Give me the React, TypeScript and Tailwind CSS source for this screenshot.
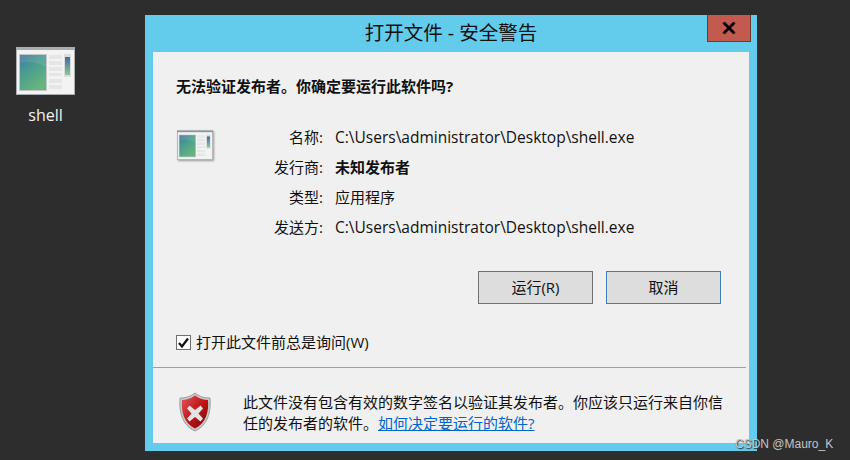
const font = { fontFamily: '"Open Sans", "Noto Sans CJK SC", sans-serif' };

const AppIcon = ({ id, className, frame }: { id: string; className: string; frame: string }) => (
    <svg viewBox="0 0 59 48" className={className}>
        <defs>
            <linearGradient id={`${id}-a`} x1="0" y1="0" x2="0.6" y2="1">
                <stop offset="0" stopColor="#46739f" />
                <stop offset="0.4" stopColor="#479a93" />
                <stop offset="1" stopColor="#68b57c" />
            </linearGradient>
            <linearGradient id={`${id}-b`} x1="0" y1="0" x2="0" y2="1">
                <stop offset="0" stopColor="#3f6aa5" />
                <stop offset="1" stopColor="#8cc98f" />
            </linearGradient>
        </defs>
        <rect x="0" y="0" width="59" height="48" fill={frame} />
        <rect x="1" y="3" width="57" height="44" fill="#f3f3f3" />
        <rect x="3" y="7" width="28" height="37" fill="#c3c7cc" />
        <rect x="4" y="8" width="26" height="35" fill={`url(#${id}-a)`} />
        <path d="M4 16 Q18 13 30 20 V8 H4 Z" fill="#ffffff" opacity="0.1" />
        <g fill="#e6e6e6">
            <rect x="33" y="8" width="13" height="4" />
            <rect x="33" y="14" width="13" height="4" />
            <rect x="33" y="20" width="13" height="4" />
            <rect x="33" y="26" width="13" height="3" />
            <rect x="33" y="32" width="13" height="4" />
            <rect x="33" y="38" width="13" height="4" />
        </g>
        <rect x="48" y="7" width="7" height="23" fill="#dcdcdc" />
        <rect x="49" y="10" width="5" height="18" fill={`url(#${id}-b)`} />
    </svg>
);

const ShieldIcon = () => (
    <svg viewBox="0 0 34 40" className="h-[40px] w-[34px]">
        <defs>
            <linearGradient id="shield" x1="0" y1="0" x2="1" y2="1">
                <stop offset="0" stopColor="#e0585a" />
                <stop offset="0.5" stopColor="#c01518" />
                <stop offset="1" stopColor="#7d0505" />
            </linearGradient>
        </defs>
        <path d="M17 1 C22 5 27 6 32 6 C33 20 30 33 17 39 C4 33 1 20 2 6 C7 6 12 5 17 1 Z" fill="#c9c9c9" stroke="#8d8d8d" strokeWidth="0.8" />
        <path d="M17 3.5 C22 7 26 8 30 8 C31 20 28 31 17 36.5 C6 31 3 20 4 8 C8 8 12 7 17 3.5 Z" fill="url(#shield)" />
        <path d="M11.5 13.5 L17 18 L22.5 13.5 L25 16.5 L20.5 21.5 L25 26.5 L22.5 29.5 L17 25 L11.5 29.5 L9 26.5 L13.5 21.5 L9 16.5 Z" fill="#e4e4e4" />
    </svg>
);

const fields = [
    { label: '名称:', value: 'C:\\Users\\administrator\\Desktop\\shell.exe' },
    { label: '发行商:', value: '未知发布者', bold: true },
    { label: '类型:', value: '应用程序' },
    { label: '发送方:', value: 'C:\\Users\\administrator\\Desktop\\shell.exe' },
];

const App = () => {
    return (
        <div className="relative h-[460px] w-[850px] overflow-hidden bg-[#2d2d2d]" style={font}>
            <div className="absolute left-[16px] top-[47px] flex w-[59px] flex-col items-center">
                <AppIcon id="desk" frame="#a9adb0" className="h-[48px] w-[59px]" />
                <span className="mt-[10px] text-[16px] leading-[20px] text-[#f2f2f2]">shell</span>
            </div>

            <div className="absolute left-[145px] top-[15px] flex h-[436px] w-[612px] flex-col bg-[#63cbec] px-[8px] pb-[8px]">
                <div className="flex h-[36px] items-center justify-center text-[19.5px] text-[#111]">打开文件 - 安全警告</div>
                <div className="absolute right-[6px] top-0 flex h-[27px] w-[44px] items-center justify-center border border-t-0 border-[#6b3a35] bg-[#c35a50]">
                    <svg viewBox="0 0 14 12" className="h-[12px] w-[14px]">
                        <path d="M1.5 0.5 L12.5 11.5 M12.5 0.5 L1.5 11.5" stroke="#000" strokeWidth="2.8" fill="none" />
                    </svg>
                </div>

                <div className="flex flex-1 flex-col border-t border-[#9fb4bd] bg-[#f0f0f0]">
                    <div className="px-[23px] pt-[24px] text-[15px] font-bold leading-[20px] text-[#111]">无法验证发布者。你确定要运行此软件吗?</div>

                    <div className="flex pl-[24px] pt-[31px]">
                        <AppIcon id="dlg" frame="#8f9396" className="mt-[3px] h-[30px] w-[36px] shadow-[1px_1px_2px_#999]" />
                        <div className="ml-[60px] flex flex-col gap-[10px]">
                            {fields.map((field) => (
                                <div key={field.label} className="flex h-[20px] items-center text-[#111]">
                                    <span className="w-[50px] whitespace-nowrap text-right text-[15px]">{field.label}</span>
                                    <span className={`ml-[12px] ${field.bold ? 'text-[15px] font-bold' : field.value.startsWith('C:') ? 'mt-[2px] text-[15.5px]' : 'text-[15px]'}`}>{field.value}</span>
                                </div>
                            ))}
                        </div>
                    </div>

                    <div className="flex justify-end gap-[13px] pr-[28px] pt-[34px]">
                        <button className="h-[33px] w-[115px] border border-[#707070] bg-[#dddddd] text-[15px] text-[#111]">运行(R)</button>
                        <button className="h-[33px] w-[115px] border border-[#3c7fb1] bg-[#dddddd] text-[15px] text-[#111]">取消</button>
                    </div>

                    <label className="flex items-center pl-[23px] pt-[28px] text-[15px] leading-[20px] text-[#111]">
                        <span className="flex h-[15px] w-[15px] items-center justify-center border border-[#707070] bg-white">
                            <svg viewBox="0 0 13 13" className="h-[13px] w-[13px]">
                                <path d="M2 7 L5 10.5 L11 2.5" stroke="#111" strokeWidth="2.2" fill="none" />
                            </svg>
                        </span>
                        <span className="ml-[5px]">打开此文件前总是询问(W)</span>
                    </label>

                    <div className="mt-[15px] mr-[3px] flex-1 border-t border-[#a0a0a0]">
                        <div className="flex items-start pl-[25px] pt-[24px]">
                            <ShieldIcon />
                            <p className="ml-[31px] w-[490px] text-[15px] leading-[21px] text-[#111]">
                                此文件没有包含有效的数字签名以验证其发布者。你应该只运行来自你信任的发布者的软件。<a className="text-[#0066cc] underline">如何决定要运行的软件?</a>
                            </p>
                        </div>
                    </div>
                </div>
            </div>

            <div className="absolute left-[735px] top-[436px] text-[12px] leading-[16px] text-[#c4c4c4] [text-shadow:1px_1px_1px_#333]" style={{ fontFamily: '"Liberation Sans", sans-serif' }}>CSDN @Mauro_K</div>
        </div>
    );
};

export default App;
